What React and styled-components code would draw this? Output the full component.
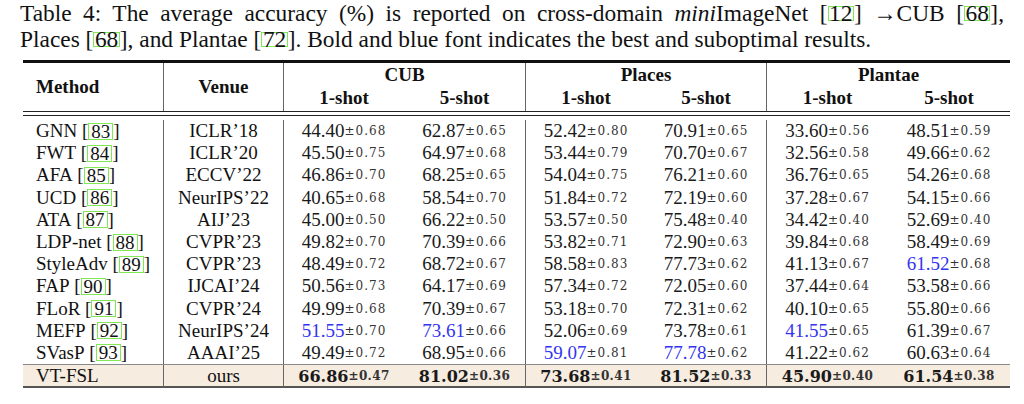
import React from 'react';
import styled, { createGlobalStyle } from 'styled-components';

const GlobalStyle = createGlobalStyle`
  html, body {
    margin: 0;
    padding: 0;
    background: #ffffff;
  }
  body {
    font-family: "Liberation Serif", "Times New Roman", serif;
    color: #111;
  }
`;

const COLS = '140px 120px 121px 121px 121px 120px 122px 122px';

const Page = styled.div`
  width: 1024px;
  height: 404px;
  overflow: hidden;
`;

const Caption = styled.div`
  margin: 0 0 0 20px;
  width: 984px;
  font-size: 23.4px;
  line-height: 26px;
`;

const CaptionLine = styled.div`
  white-space: nowrap;
  text-align: ${({ $justify }) => ($justify ? 'justify' : 'left')};
  text-align-last: ${({ $justify }) => ($justify ? 'justify' : 'left')};
`;

const Cite = styled.span`
  display: inline-block;
  border: 1.6px solid #7fe853;
  padding: ${({ $tight }) => ($tight ? '0 0.5px' : '0 2px')};
  line-height: ${({ $tight }) => ($tight ? '13px' : '15px')};
`;

const Table = styled.div`
  margin: 8px 0 0 23px;
  width: 987px;
`;

const ThickRule = styled.div`
  height: 3px;
  background: #111;
`;

const DoubleRule = styled.div`
  height: 3px;
  border-top: 1.5px solid #222;
  border-bottom: 1.5px solid #222;
`;

const HeaderGrid = styled.div`
  display: grid;
  grid-template-columns: ${COLS};
  grid-template-rows: 24px 24px;
  font-weight: bold;
  font-size: 19px;
`;

const HeadCell = styled.div`
  display: flex;
  align-items: ${({ $bottom }) => ($bottom ? 'flex-start' : 'center')};
  justify-content: ${({ $left }) => ($left ? 'flex-start' : 'center')};
  grid-row: ${({ $row }) => $row};
  grid-column: ${({ $col }) => $col};
  border-left: ${({ $divider }) => ($divider ? '1px solid #666' : 'none')};
  padding-left: ${({ $left }) => ($left ? '13px' : '0')};
`;

const Body = styled.div`
  display: grid;
  grid-template-columns: ${COLS};
  grid-auto-rows: 22.2px;
  margin-top: 4px;
  font-size: 19px;
`;

const HighlightRow = styled.div`
  display: grid;
  grid-template-columns: ${COLS};
  height: 21px;
  background: #f7ece0;
  border-top: 1px solid #8a8a8a;
  border-bottom: 2px solid #555;
  font-size: 19px;
`;

const MethodCell = styled.div`
  display: flex;
  align-items: center;
  padding-left: 13px;
  white-space: nowrap;
`;

const Cell = styled.div`
  display: flex;
  align-items: center;
  justify-content: center;
  white-space: nowrap;
  border-left: ${({ $divider }) => ($divider ? '1px solid #666' : 'none')};
`;

const Value = styled.span`
  font-family: ${({ $bold }) => ($bold ? '"DejaVu Serif", serif' : '"Liberation Serif", serif')};
  font-size: ${({ $bold }) => ($bold ? '16px' : '19px')};
  font-weight: ${({ $bold }) => ($bold ? 'bold' : 'normal')};
  color: ${({ $blue }) => ($blue ? '#3434f0' : '#1a1a1a')};
`;

const Std = styled.span`
  font-family: "DejaVu Serif", serif;
  font-size: 12px;
  letter-spacing: ${({ $bold }) => ($bold ? '0.4px' : '1px')};
  font-weight: ${({ $bold }) => ($bold ? 'bold' : 'normal')};
  color: #333;
`;

const rows = [
  ['GNN', '83', 'ICLR’18', [['44.40', '0.68'], ['62.87', '0.65'], ['52.42', '0.80'], ['70.91', '0.65'], ['33.60', '0.56'], ['48.51', '0.59']]],
  ['FWT', '84', 'ICLR’20', [['45.50', '0.75'], ['64.97', '0.68'], ['53.44', '0.79'], ['70.70', '0.67'], ['32.56', '0.58'], ['49.66', '0.62']]],
  ['AFA', '85', 'ECCV’22', [['46.86', '0.70'], ['68.25', '0.65'], ['54.04', '0.75'], ['76.21', '0.60'], ['36.76', '0.65'], ['54.26', '0.68']]],
  ['UCD', '86', 'NeurIPS’22', [['40.65', '0.68'], ['58.54', '0.70'], ['51.84', '0.72'], ['72.19', '0.60'], ['37.28', '0.67'], ['54.15', '0.66']]],
  ['ATA', '87', 'AIJ’23', [['45.00', '0.50'], ['66.22', '0.50'], ['53.57', '0.50'], ['75.48', '0.40'], ['34.42', '0.40'], ['52.69', '0.40']]],
  ['LDP-net', '88', 'CVPR’23', [['49.82', '0.70'], ['70.39', '0.66'], ['53.82', '0.71'], ['72.90', '0.63'], ['39.84', '0.68'], ['58.49', '0.69']]],
  ['StyleAdv', '89', 'CVPR’23', [['48.49', '0.72'], ['68.72', '0.67'], ['58.58', '0.83'], ['77.73', '0.62'], ['41.13', '0.67'], ['61.52', '0.68', true]]],
  ['FAP', '90', 'IJCAI’24', [['50.56', '0.73'], ['64.17', '0.69'], ['57.34', '0.72'], ['72.05', '0.60'], ['37.44', '0.64'], ['53.58', '0.66']]],
  ['FLoR', '91', 'CVPR’24', [['49.99', '0.68'], ['70.39', '0.67'], ['53.18', '0.70'], ['72.31', '0.62'], ['40.10', '0.65'], ['55.80', '0.66']]],
  ['MEFP', '92', 'NeurIPS’24', [['51.55', '0.70', true], ['73.61', '0.66', true], ['52.06', '0.69'], ['73.78', '0.61'], ['41.55', '0.65', true], ['61.39', '0.67']]],
  ['SVasP', '93', 'AAAI’25', [['49.49', '0.72'], ['68.95', '0.66'], ['59.07', '0.81', true], ['77.78', '0.62', true], ['41.22', '0.62'], ['60.63', '0.64']]],
];

const ours = [['66.86', '0.47'], ['81.02', '0.36'], ['73.68', '0.41'], ['81.52', '0.33'], ['45.90', '0.40'], ['61.54', '0.38']];

const groups = ['CUB', 'Places', 'Plantae'];

const Score = ({ value, std, blue, bold, divider }) => (
  <Cell $divider={divider}>
    <Value $blue={blue} $bold={bold}>{value}</Value>
    <Std $bold={bold}>±{std}</Std>
  </Cell>
);

export default function App() {
  return (
    <Page>
      <GlobalStyle />
      <Caption>
        <CaptionLine $justify>
          Table 4: The average accuracy (%) is reported on cross-domain <i>mini</i>ImageNet [<Cite $tight>12</Cite>] →CUB [<Cite $tight>68</Cite>],
        </CaptionLine>
        <CaptionLine>
          Places [<Cite $tight>68</Cite>], and Plantae [<Cite $tight>72</Cite>]. Bold and blue font indicates the best and suboptimal results.
        </CaptionLine>
      </Caption>
      <Table>
        <ThickRule />
        <HeaderGrid>
          <HeadCell $row="1 / 3" $col="1" $left>Method</HeadCell>
          <HeadCell $row="1 / 3" $col="2" $divider>Venue</HeadCell>
          {groups.map((g, i) => (
            <React.Fragment key={g}>
              <HeadCell $row="1" $col={`${3 + i * 2} / ${5 + i * 2}`} $divider>{g}</HeadCell>
              <HeadCell $row="2" $col={`${3 + i * 2}`} $divider $bottom>1-shot</HeadCell>
              <HeadCell $row="2" $col={`${4 + i * 2}`} $bottom>5-shot</HeadCell>
            </React.Fragment>
          ))}
        </HeaderGrid>
        <DoubleRule />
        <Body>
          {rows.map(([name, ref, venue, scores]) => (
            <React.Fragment key={name}>
              <MethodCell>
                {name}&nbsp;[<Cite>{ref}</Cite>]
              </MethodCell>
              <Cell $divider>{venue}</Cell>
              {scores.map(([v, s, blue], i) => (
                <Score key={i} value={v} std={s} blue={blue} divider={i % 2 === 0} />
              ))}
            </React.Fragment>
          ))}
        </Body>
        <HighlightRow>
          <MethodCell>VT-FSL</MethodCell>
          <Cell $divider>ours</Cell>
          {ours.map(([v, s], i) => (
            <Score key={i} value={v} std={s} bold divider={i % 2 === 0} />
          ))}
        </HighlightRow>
      </Table>
    </Page>
  );
}
